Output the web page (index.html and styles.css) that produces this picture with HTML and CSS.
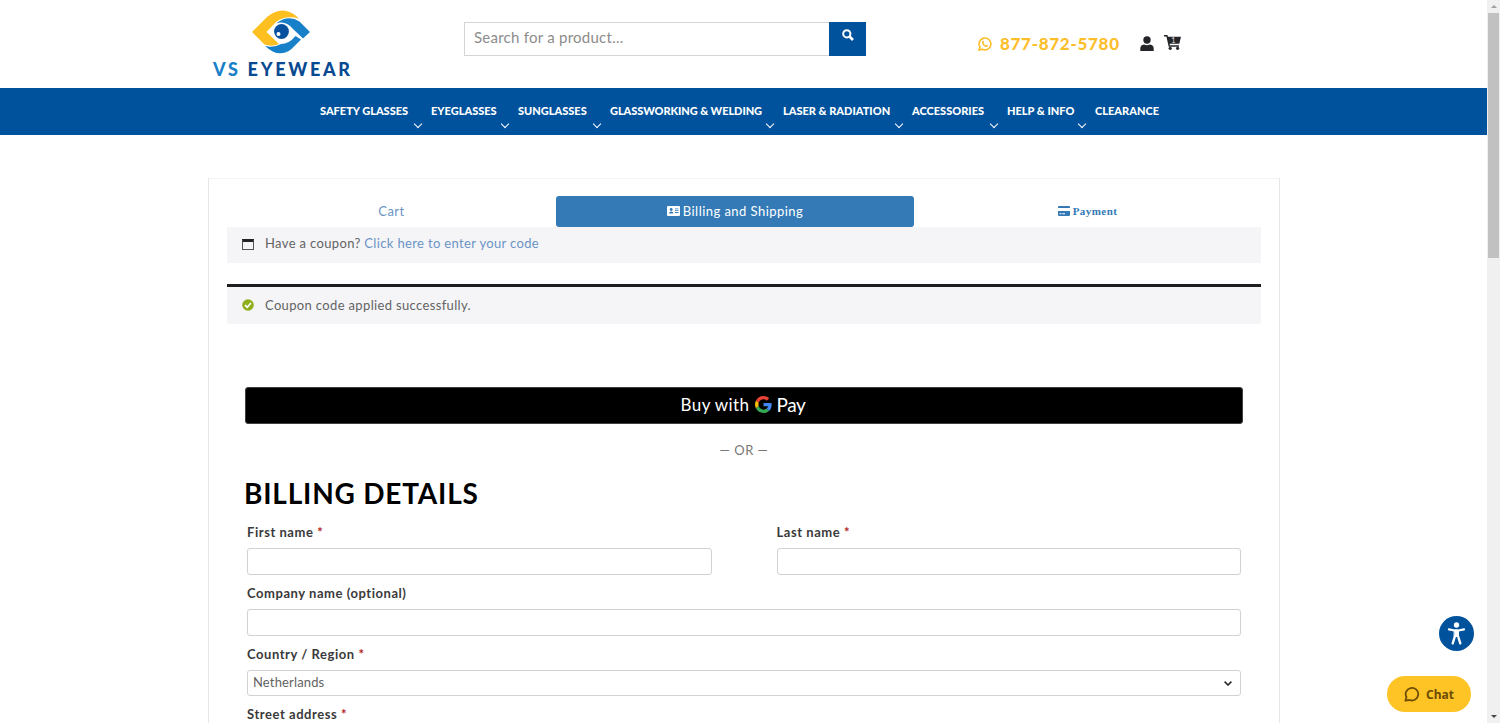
FILE: index.html
```
<!DOCTYPE html>
<html lang="en">

<head>
    <meta charset="UTF-8">
    <meta name="viewport" content="width=device-width, initial-scale=1.0">
    <title>Checkout - VS Eyewear</title>
    <link rel="stylesheet" href="styles.css">
</head>

<body>
    <div class="page">
        <header class="header">
            <a class="logo" href="#">
                <svg class="logo-eye" viewBox="0 0 58 44">
                    <path fill="#fdc020" d="M0 22 15 7Q29-5 43 5L47 8.500Q33 5 24 12L14.500 22 27 34Q20 37 12.500 34.500Z" />
                    <path fill="#1880c8" d="M24 13.500Q36 4 47.500 11.500L58 22 51 28.500 41.500 19.500Q34 10 24 13.500Z" />
                    <path fill="#1880c8" d="M13 36Q22 38 29 34Q37 34 43.500 26L49 29.500 39.500 39Q27 49 13 36Z" />
                    <circle cx="29.500" cy="21.500" r="7.400" fill="#06509e" />
                    <circle cx="26.500" cy="24" r="2" fill="#fff" />
                </svg>
                <span class="logo-text"><span class="logo-vs">VS</span> EYEWEAR</span>
            </a>
            <form class="search">
                <input type="text" placeholder="Search for a product...">
                <button type="button" aria-label="Search">
                    <svg viewBox="0 0 12 12" width="12" height="12" fill="none" stroke="#fff" stroke-width="2">
                        <circle cx="4.8" cy="4.8" r="3.6" />
                        <path d="M7.5 7.5 11 11" stroke-width="2.6" />
                    </svg>
                </button>
            </form>
            <div class="contact">
                <svg viewBox="0 0 14 14" width="14" height="14">
                    <path d="M1 13 2 10A5.9 5.9 0 1 1 4.4 12.2Z" fill="none" stroke="#fdbe2c" stroke-width="1.6" />
                    <path d="M4.5 3.8 5.7 4 6.1 5.5 5.5 6.2Q6.2 7.8 7.8 8.4L8.5 7.7 10 8.3Q10.1 10 8.4 10.1Q4.5 9.3 4 5.5Q3.9 4.3 4.5 3.8Z" fill="#fdbe2c" />
                </svg>
                <span class="phone">877-872-5780</span>
            </div>
            <div class="account">
                <svg viewBox="0 0 14 15" width="14" height="15" fill="#232529">
                    <circle cx="7" cy="4" r="3.7" />
                    <path d="M.3 15V12.5Q.3 9 4 8.5Q7 10 10 8.500Q13.7 9 13.700 12.5V15Z" />
                </svg>
                <span class="cart">
                    <svg viewBox="0 0 17 15" width="17" height="15" fill="#232529">
                        <path d="M0 0H3.4L4 1.8H17L15.3 8.8H5.6L5.9 10.3H15V11.7H4.7L2.4 1.4H0Z" />
                        <circle cx="6.2" cy="13.3" r="1.6" />
                        <circle cx="13.6" cy="13.3" r="1.6" />
                    </svg>
                    <span class="cart-count">1</span>
                </span>
            </div>
        </header>

        <nav class="nav">
            <ul>
                <li class="has-menu">SAFETY GLASSES</li>
                <li class="has-menu">EYEGLASSES</li>
                <li class="has-menu">SUNGLASSES</li>
                <li class="has-menu wide">GLASSWORKING &amp; WELDING</li>
                <li class="has-menu">LASER &amp; RADIATION</li>
                <li class="has-menu">ACCESSORIES</li>
                <li class="has-menu">HELP &amp; INFO</li>
                <li>CLEARANCE</li>
            </ul>
        </nav>

        <main class="checkout">
            <div class="tabs">
                <a class="tab" href="#">Cart</a>
                <a class="tab active" href="#">
                    <svg viewBox="0 0 13 10" width="13" height="10">
                        <rect width="13" height="10" rx="1" fill="#fff" />
                        <circle cx="4.2" cy="3.5" r="1.4" fill="#337ab7" />
                        <path d="M2 7.5Q2 5.5 4.2 5.5T6.4 7.5ZM8 2.5H11.5V3.3H8ZM8 4.3H11.5V5.1H8ZM8 6.1H11.5V6.9H8Z" fill="#337ab7" />
                    </svg>
                    Billing and Shipping
                </a>
                <a class="tab payment" href="#">
                    <svg viewBox="0 0 12 10" width="12" height="10" fill="#337ab7">
                        <path d="M0 1Q0 0 1 0H11Q12 0 12 1V2H0ZM0 5H12V9Q12 10 11 10H1Q0 10 0 9Z" />
                        <path d="M1.5 7.2H3.5V8.2H1.5ZM4.3 7.2H7V8.2H4.3Z" fill="#fff" />
                    </svg>
                    Payment
                </a>
            </div>

            <div class="notice">
                <span class="coupon-icon"></span>
                <span>Have a coupon? <a href="#">Click here to enter your code</a></span>
            </div>
            <div class="notice notice-success">
                <svg viewBox="0 0 12 12" width="12" height="12">
                    <circle cx="6" cy="6" r="5.8" fill="#8fae1b" />
                    <path d="M3 6.1 5.2 8.2 9 4" fill="none" stroke="#fff" stroke-width="1.7" />
                </svg>
                <span>Coupon code applied successfully.</span>
            </div>

            <div class="billing">
                <button class="gpay" type="button">
                    <span class="gpay-buy">Buy with</span>
                    <svg viewBox="0 0 48 48" width="17" height="17">
                        <path fill="#ea4335" d="M24 9.5c3.54 0 6.71 1.22 9.21 3.6l6.85-6.85C35.9 2.38 30.47 0 24 0 14.62 0 6.51 5.38 2.56 13.22l7.98 6.19C12.43 13.72 17.74 9.5 24 9.5z" />
                        <path fill="#4285f4" d="M46.98 24.55c0-1.57-.15-3.09-.38-4.55H24v9.02h12.94c-.58 2.96-2.26 5.48-4.78 7.18l7.73 6c4.51-4.18 7.09-10.36 7.09-17.65z" />
                        <path fill="#fbbc05" d="M10.53 28.59c-.48-1.45-.76-2.99-.76-4.59s.27-3.14.76-4.59l-7.98-6.19C.92 16.46 0 20.12 0 24s.92 7.54 2.56 10.78l7.97-6.19z" />
                        <path fill="#34a853" d="M24 48c6.48 0 11.93-2.13 15.89-5.81l-7.73-6c-2.15 1.45-4.92 2.3-8.16 2.3-6.26 0-11.57-4.22-13.47-9.91l-7.98 6.19C6.51 42.62 14.62 48 24 48z" />
                    </svg>
                    <span class="gpay-pay">Pay</span>
                </button>
                <p class="or">— OR —</p>

                <h2>BILLING DETAILS</h2>
                <form class="fields">
                    <div class="field">
                        <label for="first-name">First name <em>*</em></label>
                        <input type="text" id="first-name">
                    </div>
                    <div class="field">
                        <label for="last-name">Last name <em>*</em></label>
                        <input type="text" id="last-name">
                    </div>
                    <div class="field full">
                        <label for="company">Company name (optional)</label>
                        <input type="text" id="company">
                    </div>
                    <div class="field full">
                        <label>Country / Region <em>*</em></label>
                        <div class="select">
                            <span>Netherlands</span>
                            <svg viewBox="0 0 8 5" width="8" height="5" fill="none" stroke="#222" stroke-width="1.5">
                                <path d="M.6.6 4 4 7.4.6" />
                            </svg>
                        </div>
                    </div>
                    <div class="field full">
                        <label for="street">Street address <em>*</em></label>
                        <input type="text" id="street">
                    </div>
                </form>
            </div>
        </main>
    </div>

    <div class="scrollbar">
        <span class="arrow up"></span>
        <span class="thumb"></span>
        <span class="arrow down"></span>
    </div>

    <button class="accessibility" type="button" aria-label="Accessibility">
        <svg viewBox="0 0 35 35" width="35" height="35" fill="none" stroke="#fff" stroke-linecap="round" stroke-linejoin="round">
            <circle cx="17.5" cy="9" r="2.7" fill="#fff" stroke="none" />
            <path d="M10 13.3 15.5 14.5H19.5L25 13.3" stroke-width="2.3" />
            <path d="M15.5 14.5H19.5V20.5H15.5Z" fill="#fff" stroke-width="1" />
            <path d="M16 20 13.7 27.3M19 20 21.3 27.3" stroke-width="2.4" />
        </svg>
    </button>
    <button class="chat" type="button">
        <svg viewBox="0 0 16 16" width="16" height="16" fill="none" stroke="#6c4d05" stroke-width="1.8" stroke-linejoin="round">
            <path d="M1.3 14.7 2.5 11.3A6.3 6.3 0 1 1 5.6 14Z" />
        </svg>
        Chat
    </button>
</body>

</html>
```
FILE: styles.css
```
* {
    margin: 0;
    padding: 0;
    box-sizing: border-box;
}

body {
    height: 100vh;
    display: flex;
    overflow: hidden;
    background: #fff;
    color: #636363;
    font-family: Lato, sans-serif;
    font-size: 13px;
}

a {
    color: #6b93c4;
    text-decoration: none;
}

button {
    border: none;
    cursor: pointer;
    font-family: inherit;
}

svg {
    flex: none;
}

.page {
    flex: 1;
    height: 100vh;
    overflow: hidden;
}

/* Header */
.header {
    height: 88px;
    padding-left: 213px;
    display: flex;
    align-items: flex-start;
}

.logo {
    width: 138px;
    padding-top: 10px;
    display: flex;
    flex-direction: column;
}

.logo-eye {
    width: 58px;
    height: 44px;
    margin-left: 39px;
}

.logo-text {
    margin-top: 4px;
    color: #084a91;
    font-size: 18px;
    line-height: 22px;
    font-weight: 900;
    letter-spacing: 2.7px;
    white-space: nowrap;
}

.logo-vs {
    color: #1880c8;
}

.search {
    display: flex;
    width: 402px;
    height: 34px;
    margin: 22px 0 0 113px;
}

.search input {
    flex: 1;
    min-width: 0;
    padding: 0 9px 4px;
    border: 1px solid #d5d5d5;
    border-right: none;
    outline: none;
    font-family: inherit;
    font-size: 15px;
    letter-spacing: 0.25px;
}

.search input::placeholder {
    color: #8c8c8c;
}

.search button {
    width: 37px;
    padding-bottom: 6px;
    background: #01529c;
}

.contact {
    display: flex;
    align-items: center;
    gap: 8px;
    height: 24px;
    margin: 31px 0 0 112px;
}

.contact svg {
    margin-top: 2px;
}

.phone {
    color: #fdbe2c;
    font-size: 17px;
    font-weight: 900;
    letter-spacing: 0.7px;
}

.account {
    display: flex;
    gap: 10px;
    width: 41px;
    margin: 36px 306px 0 auto;
}

.cart {
    position: relative;
    margin-top: -1px;
}

.cart-count {
    position: absolute;
    top: 1px;
    left: 7px;
    color: #ddd;
    font-size: 8px;
    line-height: 9px;
}

/* Navigation */
.nav {
    height: 47px;
    background: #01529c;
}

.nav ul {
    display: grid;
    grid-template-columns: 111px 87px 92px 173px 129px 95px 88px 70px;
    margin-left: 320px;
    list-style: none;
}

.nav li {
    padding-top: 15px;
    color: #fff;
    font-size: 11px;
    line-height: 15px;
    font-weight: 900;
    white-space: nowrap;
}

.nav .wide {
    letter-spacing: -0.07px;
}

.has-menu::after {
    content: "";
    display: block;
    width: 5px;
    height: 5px;
    margin: 3px 10px 0 auto;
    border: solid #fff;
    border-width: 0 1.5px 1.5px 0;
    transform: rotate(45deg);
}

/* Checkout */
.checkout {
    width: 1072px;
    height: 700px;
    margin: 43px 0 0 208px;
    padding: 17px 18px;
    border: 1px solid #e6e6e6;
    border-top-color: #f4f4f4;
}

.tabs {
    display: grid;
    grid-template-columns: 329px 358px 347px;
    height: 31px;
}

.tab {
    display: flex;
    align-items: center;
    justify-content: center;
    gap: 3px;
    padding-bottom: 2px;
    letter-spacing: 0.45px;
}

.tab.active {
    border-radius: 3px;
    background: #337ab7;
    color: #fff;
}

.tab.payment {
    color: #337ab7;
    font-family: "Liberation Serif", serif;
    font-size: 11px;
    font-weight: 700;
}

.notice {
    display: flex;
    align-items: center;
    gap: 11px;
    height: 36px;
    padding: 0 15px 4px;
    background: #f5f5f8;
    letter-spacing: 0.35px;
}

.coupon-icon {
    width: 12px;
    height: 11px;
    margin-top: 2px;
    border: 1px solid #555;
    border-top: 3px solid #222;
}

.notice-success {
    height: 40px;
    margin-top: 21px;
    border-top: 3px solid #1e1e21;
    padding-bottom: 2px;
}

.billing {
    padding: 63px 18px 0;
}

.gpay {
    display: flex;
    align-items: center;
    justify-content: center;
    width: 100%;
    height: 37px;
    padding: 0 2px 2px 0;
    border: 1px solid #3c4043;
    border-radius: 3px;
    background: #000;
    color: #fff;
    font-size: 17px;
}

.gpay-buy {
    margin-right: 6px;
    letter-spacing: 0.4px;
}

.gpay-pay {
    margin-left: 4px;
    font-size: 19px;
    letter-spacing: -0.4px;
}

.or {
    margin-top: 18px;
    color: #777;
    line-height: 16px;
    letter-spacing: 0.5px;
    text-align: center;
}

.billing h2 {
    margin: 18px 0 0 -1px;
    color: #000;
    font-size: 28px;
    line-height: 34px;
    font-weight: 700;
    letter-spacing: 0.8px;
}

.fields {
    display: grid;
    grid-template-columns: 1fr 1fr;
    gap: 10px 65px;
    margin: 14px 2px 0;
}

.field.full {
    grid-column: 1 / -1;
}

.field label {
    display: block;
    height: 24px;
    color: #3a3a3a;
    font-size: 13px;
    line-height: 17px;
    font-weight: 700;
    letter-spacing: 0.55px;
}

.field em {
    color: #b22222;
    font-style: normal;
}

.field input,
.select {
    display: block;
    width: 100%;
    height: 27px;
    border: 1px solid #d2d2d2;
    border-radius: 3px;
}

.select {
    display: flex;
    align-items: center;
    justify-content: space-between;
    height: 26px;
    padding: 0 8px 0 5px;
    letter-spacing: 0.15px;
}

.select span {
    padding-bottom: 3px;
}

/* Page scrollbar */
.scrollbar {
    display: flex;
    flex-direction: column;
    align-items: center;
    width: 13px;
    height: 100vh;
    padding: 5px 0;
    background: #f0f0f0;
}

.thumb {
    width: 11px;
    height: 245px;
    margin: 5px 0 auto;
    background: #c1c1c1;
}

.arrow {
    border: 3px solid transparent;
}

.arrow.up {
    border-top: none;
    border-bottom-color: #a0a0a0;
}

.arrow.down {
    border-bottom: none;
    border-top-color: #444;
}

/* Floating buttons */
.accessibility {
    position: fixed;
    right: 26px;
    bottom: 72px;
    width: 35px;
    height: 35px;
    border-radius: 50%;
    background: #01529c;
}

.chat {
    position: fixed;
    right: 29px;
    bottom: 11px;
    display: flex;
    align-items: center;
    justify-content: center;
    gap: 6px;
    width: 84px;
    height: 36px;
    border-radius: 18px;
    background: #fec325;
    color: #6c4d05;
    font-family: "Noto Sans", sans-serif;
    font-size: 12px;
    font-weight: 700;
}
```
